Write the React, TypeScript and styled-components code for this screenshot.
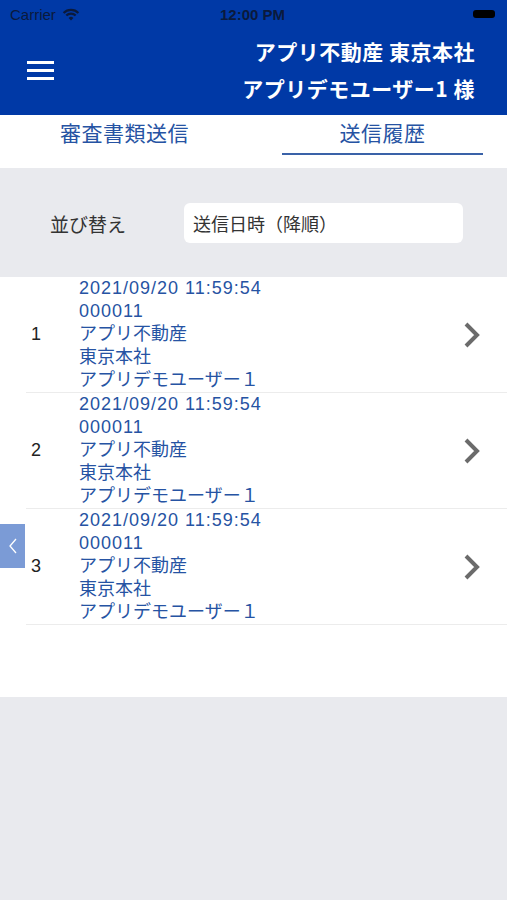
import React from 'react';
import styled, { createGlobalStyle } from 'styled-components';

const BLUE = '#0039a6';
const TEXT_BLUE = '#2653a3';
const GRAY_BG = '#e9eaee';

const GlobalStyle = createGlobalStyle`
  html, body {
    margin: 0;
    padding: 0;
    background: ${GRAY_BG};
  }
  body {
    font-family: "Liberation Sans", "Noto Sans CJK JP", sans-serif;
  }
`;

const Screen = styled.div`
  position: relative;
  width: 507px;
  min-height: 900px;
  background: ${GRAY_BG};
`;

const Header = styled.header`
  background: ${BLUE};
  height: 115px;
  display: flex;
  flex-direction: column;
`;

const StatusBar = styled.div`
  height: 28px;
  display: grid;
  grid-template-columns: 1fr auto 1fr;
  align-items: center;
  padding: 0 12px 0 10px;
  color: #0b1a3c;
  font-size: 15px;
`;

const Carrier = styled.div`
  display: flex;
  align-items: center;
  gap: 6px;
`;

const Clock = styled.div`
  font-weight: bold;
  font-size: 15px;
`;

const Battery = styled.div`
  justify-self: end;
  width: 22px;
  height: 8px;
  border-radius: 3px;
  background: #000;
`;

const NavBar = styled.div`
  flex: 1;
  display: flex;
  align-items: center;
  justify-content: space-between;
  padding: 0 32px 0 27px;
`;

const Hamburger = styled.div`
  width: 27px;
  display: flex;
  flex-direction: column;
  gap: 5px;
  margin-top: -2px;
  span {
    display: block;
    height: 3px;
    background: #fff;
  }
`;

const Title = styled.div`
  color: #fff;
  font-family: "Noto Sans CJK JP", sans-serif;
  font-weight: bold;
  font-size: 21px;
  letter-spacing: 0.5px;
  line-height: 37px;
  text-align: right;
  margin-top: -3px;
`;

const Tabs = styled.nav`
  background: #fff;
  height: 53px;
  display: grid;
  grid-template-columns: 1fr 1fr;
  column-gap: 57px;
  padding: 0 24px;
`;

const Tab = styled.div<{ $active?: boolean }>`
  color: ${TEXT_BLUE};
  font-family: "Noto Sans CJK JP", sans-serif;
  font-size: 21px;
  letter-spacing: 0.5px;
  text-align: center;
  padding-top: 2px;
  height: 36px;
  line-height: 30px;
  border-bottom: 2px solid ${(p) => (p.$active ? '#3a62a8' : 'transparent')};
`;

const SortBar = styled.div`
  height: 109px;
  display: flex;
  align-items: center;
  padding: 0 44px 0 50px;
  gap: 58px;
  box-sizing: border-box;
`;

const SortLabel = styled.div`
  font-family: "Noto Sans CJK JP", sans-serif;
  font-size: 19px;
  color: #333;
  margin-top: 2px;
`;

const SortSelect = styled.div`
  flex: 1;
  height: 40px;
  border-radius: 6px;
  background: #fff;
  display: flex;
  align-items: center;
  padding-left: 9px;
  font-family: "Noto Sans CJK JP", sans-serif;
  font-size: 18px;
  color: #333;
  margin-top: 1px;
`;

const List = styled.div`
  background: #fff;
  height: 420px;
`;

const Row = styled.div`
  display: flex;
  align-items: center;
  height: 116px;
  margin-left: 26px;
  border-bottom: 1px solid #ececec;
  box-sizing: border-box;
`;

const Index = styled.div`
  width: 53px;
  padding-left: 5px;
  box-sizing: border-box;
  font-size: 18px;
  color: #222;
`;

const Lines = styled.div`
  flex: 1;
  color: ${TEXT_BLUE};
  font-size: 18px;
  line-height: 23.2px;
`;

const Line = styled.div<{ $num?: boolean }>`
  letter-spacing: ${(p) => (p.$num ? '1px' : '0')};
  white-space: nowrap;
`;

const Chevron = styled.svg`
  width: 20px;
  height: 28px;
  margin-right: 25px;
`;

const SideTab = styled.div`
  position: absolute;
  left: 0;
  top: 524px;
  width: 25px;
  height: 44px;
  background: #7b9bd6;
  display: flex;
  align-items: center;
  justify-content: center;
`;

const rows = [1, 2, 3].map((n) => ({
  n,
  date: '2021/09/20 11:59:54',
  code: '000011',
  company: 'アプリ不動産',
  branch: '東京本社',
  user: 'アプリデモユーザー１',
}));

const WifiIcon = () => (
  <svg width="18" height="13" viewBox="0 0 18 13">
    <path d="M9 12.5 L6.6 9.9 A3.4 3.4 0 0 1 11.4 9.9 Z" fill="#0b1a3c" />
    <path d="M4.3 7.6 A6.6 6.6 0 0 1 13.7 7.6" stroke="#0b1a3c" strokeWidth="2.2" fill="none" />
    <path d="M1.6 4.9 A10.4 10.4 0 0 1 16.4 4.9" stroke="#0b1a3c" strokeWidth="2.2" fill="none" />
  </svg>
);

export default function App() {
  return (
    <Screen>
      <GlobalStyle />
      <Header>
        <StatusBar>
          <Carrier>
            Carrier <WifiIcon />
          </Carrier>
          <Clock>12:00 PM</Clock>
          <Battery />
        </StatusBar>
        <NavBar>
          <Hamburger>
            <span />
            <span />
            <span />
          </Hamburger>
          <Title>
            <div>アプリ不動産 東京本社</div>
            <div>アプリデモユーザー1 様</div>
          </Title>
        </NavBar>
      </Header>

      <Tabs>
        <Tab>審査書類送信</Tab>
        <Tab $active>送信履歴</Tab>
      </Tabs>

      <SortBar>
        <SortLabel>並び替え</SortLabel>
        <SortSelect>送信日時（降順）</SortSelect>
      </SortBar>

      <List>
        {rows.map((r) => (
          <Row key={r.n}>
            <Index>{r.n}</Index>
            <Lines>
              <Line $num>{r.date}</Line>
              <Line $num>{r.code}</Line>
              <Line>{r.company}</Line>
              <Line>{r.branch}</Line>
              <Line>{r.user}</Line>
            </Lines>
            <Chevron viewBox="0 0 20 28">
              <path d="M4 3 L15 14 L4 25" stroke="#6b6b6b" strokeWidth="4" fill="none" />
            </Chevron>
          </Row>
        ))}
      </List>

      <SideTab>
        <svg width="10" height="18" viewBox="0 0 10 18">
          <path d="M8 2 L2 9 L8 16" stroke="#fff" strokeWidth="1.3" fill="none" />
        </svg>
      </SideTab>
    </Screen>
  );
}
